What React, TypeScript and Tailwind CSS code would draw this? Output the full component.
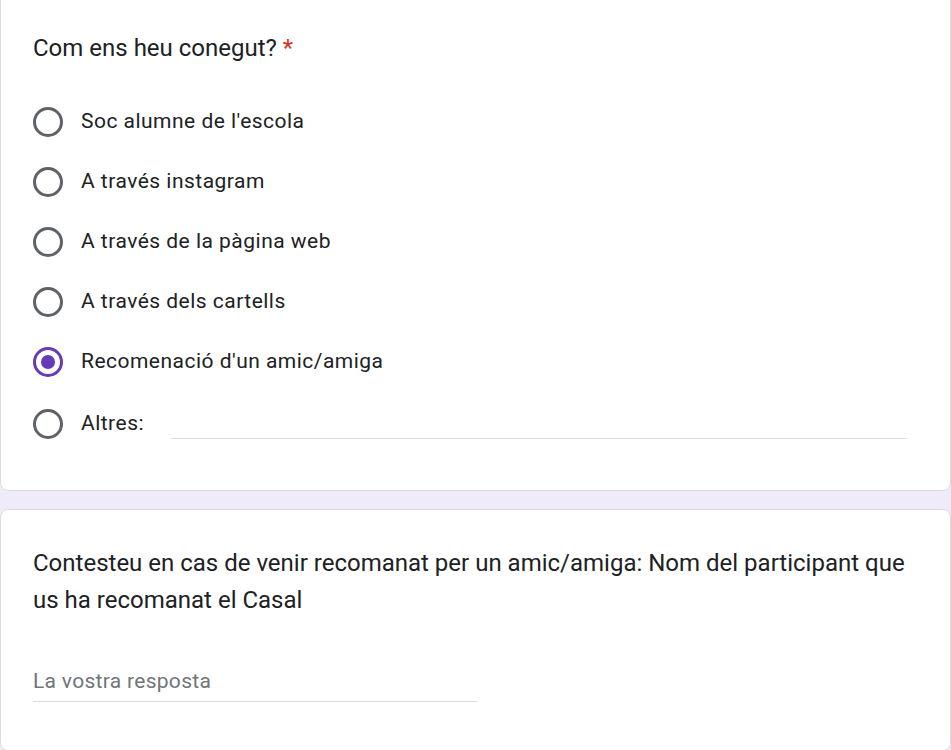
const options = [
  { label: "Soc alumne de l'escola", checked: false },
  { label: 'A través instagram', checked: false },
  { label: 'A través de la pàgina web', checked: false },
  { label: 'A través dels cartells', checked: false },
  { label: "Recomenació d'un amic/amiga", checked: true },
];

function Radio({ checked }: { checked: boolean }) {
  return (
    <span
      className={
        'flex h-[30px] w-[30px] shrink-0 items-center justify-center rounded-full border-[3px] ' +
        (checked ? 'border-[#673ab7]' : 'border-[#5f6368]')
      }
    >
      {checked && <span className="h-[14px] w-[14px] rounded-full bg-[#673ab7]" />}
    </span>
  );
}

export default function App() {
  return (
    <div
      className="min-h-[750px] overflow-hidden bg-[#f0ebf8] text-[#202124]"
      style={{ fontFamily: 'Roboto, "Noto Sans", Arial, sans-serif' }}
    >
      {/* pregunta 1 */}
      <div className="-mt-3 rounded-lg border border-[#dadce0] bg-white pb-[35px] pl-[32px] pr-[43px] pt-[43px]">
        <div className="text-[24px] leading-[32px]">
          Com ens heu conegut? <span className="text-[#d93025]">*</span>
        </div>

        <div className="mt-[28px]">
          {options.map((o) => (
            <label key={o.label} className="flex h-[60px] items-center gap-[18px]">
              <Radio checked={o.checked} />
              <span className="text-[21px] tracking-[0.48px]">{o.label}</span>
            </label>
          ))}
          <label className="flex h-[63px] items-center gap-[18px]">
            <Radio checked={false} />
            <span className="text-[21px] tracking-[0.48px]">Altres:</span>
            <span className="ml-[9px] mt-[30px] h-px flex-1 bg-[#dadce0]" />
          </label>
        </div>
      </div>

      {/* pregunta 2 */}
      <div className="mt-[18px] rounded-lg border border-[#dadce0] bg-white pb-[48px] pl-[32px] pr-[40px] pt-[35px]">
        <div className="text-[24px] leading-[37px]">
          Contesteu en cas de venir recomanat per un amic/amiga: Nom del participant que us ha
          recomanat el Casal
        </div>
        <div className="mt-[47px] w-[444px] border-b border-[#dadce0] pb-[5px]">
          <span className="text-[21px] leading-[30px] tracking-[0.3px] text-[#70757a]">
            La vostra resposta
          </span>
        </div>
      </div>
    </div>
  );
}
